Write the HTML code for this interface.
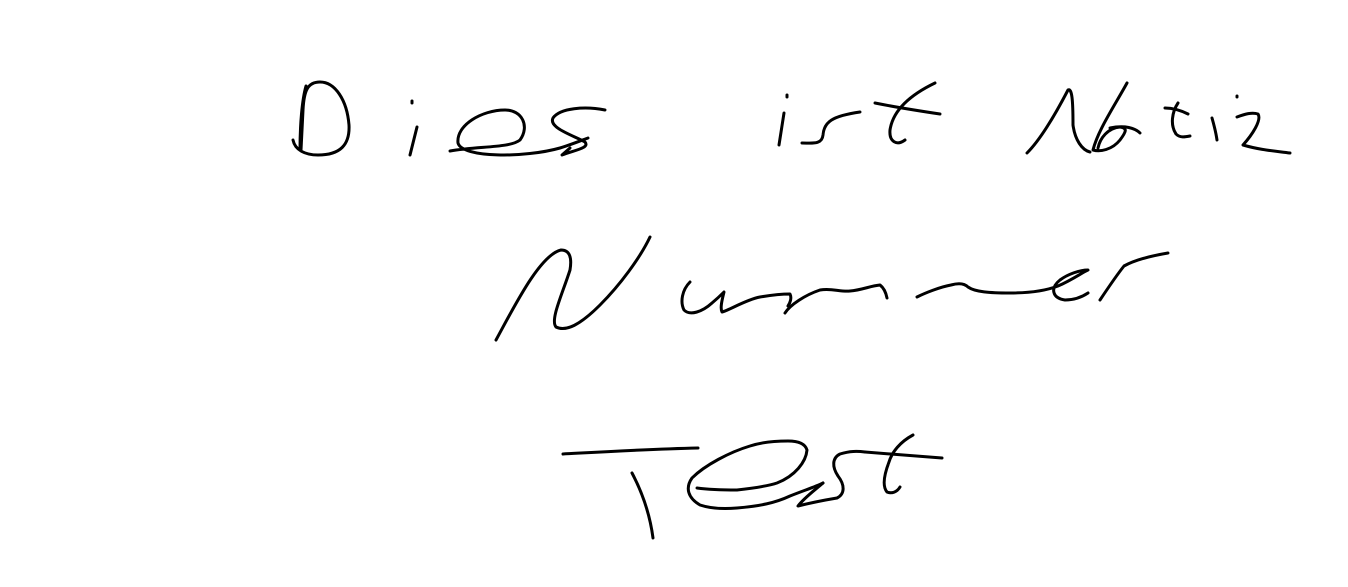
<!DOCTYPE html>
<html><head><meta charset="utf-8"><style>
html,body{margin:0;padding:0;background:#fff;width:1348px;height:587px;overflow:hidden}
svg{display:block}
</style></head><body>
<svg width="1348" height="587" viewBox="0 0 1348 587" xmlns="http://www.w3.org/2000/svg">
<title>Dies ist Notiz Nummer Test</title>
<g fill="none" stroke="#000" stroke-width="3" stroke-linecap="round" stroke-linejoin="round">
<path d="M293,140 C295,150 305,155 318,155 C340,155 350,145 349,125 C347,100 335,82 320,82 C308,82 304,90 303,110 L301,150"/>
<path d="M306,86 C302,100 300,125 300,150"/>
<path d="M412,101 L412,103"/>
<path d="M417,127 L410,155"/>
<path d="M450,151 C480,146 510,148 520,140 C530,126 522,110 505,110 C482,110 456,125 458,143 C462,158 525,158 560,148 C570,145 580,141 588,138"/>
<path d="M605,110 C585,106 560,108 553,118 C548,128 575,136 585,142 C590,148 575,150 562,155 L570,148"/>
<path d="M787,95 L787,97"/>
<path d="M784,113 L779,145"/>
<path d="M802,143 C812,143 822,145 823,135 C824,122 832,116 860,112"/>
<path d="M935,83 C910,95 893,110 890,130 C889,142 897,146 905,140"/>
<path d="M875,103 C895,107 920,111 940,114"/>
<path d="M1027,153 C1040,140 1055,115 1068,90 C1072,88 1073,100 1073,125 C1075,140 1082,150 1090,152"/>
<path d="M1127,83 C1115,105 1098,130 1093,150 C1100,152 1112,150 1120,140 C1126,132 1128,128 1120,127 C1108,128 1100,138 1098,148"/>
<path d="M1110,128 C1125,125 1135,128 1140,133"/>
<path d="M1165,108 C1172,108 1180,110 1188,114"/>
<path d="M1178,103 C1172,112 1170,125 1176,134 C1180,138 1185,137 1190,136"/>
<path d="M1237,96 L1237,97"/>
<path d="M1212,118 C1214,125 1216,133 1217,140"/>
<path d="M1237,117 C1245,114 1252,112 1258,114 C1262,120 1252,135 1243,145 C1260,150 1275,151 1290,153"/>
<path d="M496,340 C515,305 540,255 561,250 C570,250 572,258 570,270 C562,295 550,320 556,327 C566,332 580,325 600,305 C620,285 640,258 650,237"/>
<path d="M690,282 C682,290 680,302 684,310 C690,316 702,312 712,303 C718,298 722,294 724,292 C722,300 720,308 722,312 C730,310 745,300 760,297 C772,295 782,294 790,294 C792,298 790,303 788,306"/>
<path d="M785,313 C790,305 805,295 820,290 C832,288 840,292 850,291 C862,290 870,286 880,285 C884,288 886,293 887,298"/>
<path d="M917,297 C925,293 940,287 951,285 C958,283 964,283 968,287 C975,292 990,293 1010,293 C1030,293 1045,291 1058,286 C1072,280 1083,272 1088,270 C1080,270 1068,274 1060,280 C1050,288 1052,298 1065,300 C1075,300 1082,297 1088,293"/>
<path d="M1100,300 C1108,288 1116,276 1124,266 C1135,260 1150,256 1168,253"/>
<path d="M563,454 C600,452 650,449 698,448"/>
<path d="M632,473 C642,492 650,515 653,538"/>
<path d="M697,488 C712,490 725,490 737,490 C755,488 768,486 777,483 C795,476 806,462 807,450 C805,443 797,441 788,441 C775,441 762,442 750,446 C730,452 705,465 692,478 C685,488 688,498 700,505 C712,509 725,509 737,508 C760,506 775,503 790,496 C805,490 815,487 823,483"/>
<path d="M823,483 C815,490 805,497 798,506 C810,503 825,500 837,498 C845,494 845,485 838,476 C832,467 832,458 840,454 C850,451 857,451 865,452"/>
<path d="M865,452 C890,454 915,456 942,458"/>
<path d="M913,435 C900,442 892,452 889,462 C884,475 882,486 887,492 C892,494 897,492 900,487"/>
</g>
</svg>
</body></html>
